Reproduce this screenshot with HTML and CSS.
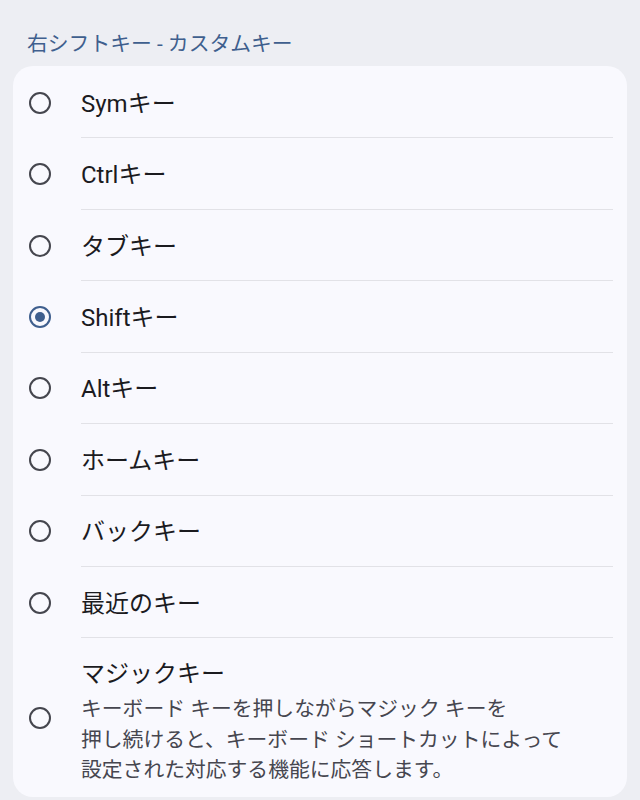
FILE: index.html
```html
<!DOCTYPE html>
<html lang="ja">
<head>
<meta charset="utf-8">
<link rel="stylesheet" href="styles.css">
</head>
<body>
<div class="page">
  <div class="header">右シフトキー - カスタムキー</div>
  <div class="card">
    <div class="row"><span class="radio"></span><div class="text"><div class="title">Symキー</div></div></div>
    <div class="row"><span class="radio"></span><div class="text"><div class="title">Ctrlキー</div></div></div>
    <div class="row"><span class="radio"></span><div class="text"><div class="title">タブキー</div></div></div>
    <div class="row"><span class="radio checked"></span><div class="text"><div class="title">Shiftキー</div></div></div>
    <div class="row"><span class="radio"></span><div class="text"><div class="title">Altキー</div></div></div>
    <div class="row"><span class="radio"></span><div class="text"><div class="title">ホームキー</div></div></div>
    <div class="row"><span class="radio"></span><div class="text"><div class="title">バックキー</div></div></div>
    <div class="row"><span class="radio"></span><div class="text"><div class="title">最近のキー</div></div></div>
    <div class="row last"><span class="radio"></span><div class="text"><div class="title">マジックキー</div><div class="desc">キーボード キーを押しながらマジック キーを<br>押し続けると、キーボード ショートカットによって<br>設定された対応する機能に応答します。</div></div></div>
  </div>
</div>
</body>
</html>
```
FILE: styles.css
```css
html, body {
  margin: 0;
  padding: 0;
  background: #edeef3;
}
body {
  font-family: "Roboto", "Noto Sans CJK JP", sans-serif;
  width: 640px;
  height: 800px;
  overflow: hidden;
}
.page {
  display: flex;
  flex-direction: column;
}
.header {
  color: #3f5f8e;
  font-size: 20.8px;
  line-height: 28px;
  padding: 30px 0 0 27px;
  height: 36px;
}
.card {
  margin: 0 13px;
  background: #f9f9fe;
  border-radius: 20px;
  padding-top: 1px;
  height: 731px;
  box-sizing: border-box;
  display: flex;
  flex-direction: column;
}
.row {
  display: flex;
  align-items: center;
}
.radio {
  flex: none;
  box-sizing: border-box;
  width: 22px;
  height: 22px;
  border: 2px solid #45464e;
  border-radius: 50%;
  margin: 0 30px 0 16px;
  display: flex;
  align-items: center;
  justify-content: center;
}
.radio.checked {
  border-color: #3f5f8e;
}
.radio.checked::after {
  content: "";
  width: 10px;
  height: 10px;
  border-radius: 50%;
  background: #3f5f8e;
}
.text {
  flex: 1;
  margin-right: 14px;
  height: 71.43px;
  box-sizing: border-box;
  padding-top: 3px;
  border-bottom: 1px solid #e2e2e7;
  display: flex;
  flex-direction: column;
  justify-content: center;
}
.title {
  color: #1b1b1f;
  font-size: 24px;
  line-height: 32px;
}
.row.last .text {
  height: auto;
  border-bottom: none;
  padding: 20px 0 12px;
  justify-content: flex-start;
}
.desc {
  color: #46464f;
  font-size: 20.8px;
  line-height: 30.5px;
  margin-top: 4px;
}
```
